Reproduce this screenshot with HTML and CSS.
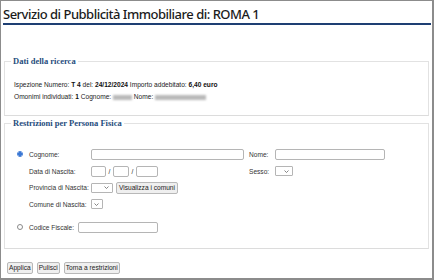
FILE: index.html
```html
<!DOCTYPE html>
<html>
<head>
  <meta charset="utf-8">
  <title>Servizio di Pubblicità Immobiliare</title>
  <link rel="stylesheet" href="styles.css">
</head>
<body>
  <div class="page">
    <h1 class="title">Servizio di Pubblicità Immobiliare di: ROMA 1</h1>

    <fieldset class="box box-dati">
      <legend>Dati della ricerca</legend>
      <div class="info">
        Ispezione Numero: <b>T 4</b> del: <b>24/12/2024</b> Importo addebitato: <b>6,40 euro</b>
      </div>
      <div class="info">
        Omonimi individuati: <b>1</b> Cognome: <span class="blur blur-short"></span> Nome: <span class="blur blur-long"></span>
      </div>
    </fieldset>

    <fieldset class="box box-restr">
      <legend>Restrizioni per Persona Fisica</legend>
      <div class="form">
        <span class="radio checked"></span>
        <label class="lbl">Cognome:</label>
        <div class="field"><span class="input w-cognome"></span></div>
        <label class="lbl">Nome:</label>
        <div class="field"><span class="input w-nome"></span></div>

        <span></span>
        <label class="lbl">Data di Nascita:</label>
        <div class="field">
          <span class="input w-gg"></span><span class="slash">/</span><span class="input w-mm"></span><span class="slash">/</span><span class="input w-aaaa"></span>
        </div>
        <label class="lbl">Sesso:</label>
        <div class="field">
          <span class="select w-sesso"><svg width="5" height="3" viewBox="0 0 5 3"><path d="M0.5 0.5 L2.5 2.5 L4.5 0.5" fill="none" stroke="#666" stroke-width="0.8"/></svg></span>
        </div>

        <span></span>
        <label class="lbl">Provincia di Nascita:</label>
        <div class="field span-rest">
          <span class="select w-prov"><svg width="5" height="3" viewBox="0 0 5 3"><path d="M0.5 0.5 L2.5 2.5 L4.5 0.5" fill="none" stroke="#666" stroke-width="0.8"/></svg></span>
          <span class="btn btn-comuni">Visualizza i comuni</span>
        </div>

        <span></span>
        <label class="lbl">Comune di Nascita:</label>
        <div class="field span-rest">
          <span class="select w-comune"><svg width="5" height="3" viewBox="0 0 5 3"><path d="M0.5 0.5 L2.5 2.5 L4.5 0.5" fill="none" stroke="#666" stroke-width="0.8"/></svg></span>
        </div>
      </div>

      <div class="cf-row">
        <span class="radio"></span>
        <label class="lbl">Codice Fiscale:</label>
        <span class="input w-cf"></span>
      </div>
    </fieldset>

    <div class="actions">
      <span class="btn">Applica</span>
      <span class="btn">Pulisci</span>
      <span class="btn btn-torna">Torna a restrizioni</span>
    </div>
  </div>
</body>
</html>
```

FILE: styles.css
```css
body {
  margin: 0;
  padding: 0;
  background-color: #fff;
  font-family: "Liberation Sans", Arial, sans-serif;
  font-size: 6.6px;
  color: #222;
}

.page {
  box-sizing: border-box;
  width: 434px;
  height: 280px;
  border-top: 1px solid #8c8c8c;
  border-left: 1px solid #8c8c8c;
  border-right: 2px solid #8c8c8c;
  border-bottom: 2px solid #8c8c8c;
  padding: 0 1px 0 2px;
}

.title {
  margin: 6px 0 0 0;
  padding: 0 0 1px 0;
  font-family: "Noto Sans", sans-serif;
  font-weight: 500;
  font-size: 13px;
  letter-spacing: -0.5px;
  line-height: 15px;
  color: #1b1b1b;
  border-bottom: 2px solid #1e3f73;
}

/* fieldsets */
.box {
  margin: 0 2px 0 1px;
  padding: 0 9px;
  border: 1px solid #e2e2e2;
  border-bottom-color: #dcdcdc;
}
.box legend {
  padding: 0 2px;
  margin-left: -3px;
  font-family: "Liberation Serif", "Times New Roman", serif;
  font-weight: bold;
  font-size: 8.5px;
  color: #1f4d7d;
}
.box-dati {
  margin-top: 31px;
  padding-top: 13px;
  padding-bottom: 12px;
}
.box-restr {
  margin-top: 2px;
  padding-top: 18px;
  padding-bottom: 15px;
}

.info {
  line-height: 12px;
  white-space: nowrap;
}
.info b {
  font-weight: bold;
  color: #111;
}
.blur {
  display: inline-block;
  height: 5px;
  vertical-align: middle;
  background-color: #b9b9b9;
  filter: blur(1px);
}
.blur-short { width: 19px; }
.blur-long { width: 51px; }

/* restriction form */
.form {
  display: grid;
  grid-template-columns: 15px 62px 158px 26px auto;
  grid-auto-rows: 16.7px;
  align-items: center;
}
.span-rest {
  grid-column: 3 / 6;
}
.field {
  display: flex;
  align-items: center;
}
.lbl {
  white-space: nowrap;
  color: #333;
}

.radio {
  box-sizing: border-box;
  display: inline-block;
  width: 6px;
  height: 6px;
  margin-left: 3px;
  border: 1px solid #8a8a8a;
  border-radius: 50%;
  background-color: #fff;
}
.radio.checked {
  border-color: #3b78d4;
  background: radial-gradient(circle, #3b78d4 0 1.6px, #fff 2px);
}

.input {
  box-sizing: border-box;
  display: inline-block;
  height: 11px;
  border: 1px solid #b5b5b5;
  border-radius: 2px;
  background-color: #fff;
}
.w-cognome { width: 153px; }
.w-nome { width: 110px; }
.w-gg { width: 15px; }
.w-mm { width: 16px; }
.w-aaaa { width: 22px; }
.w-cf { width: 80px; }
.slash {
  width: 7px;
  text-align: center;
}

.select {
  box-sizing: border-box;
  display: inline-flex;
  align-items: center;
  justify-content: flex-end;
  padding-right: 3px;
  height: 10px;
  border: 1px solid #b5b5b5;
  border-radius: 1px;
  background-color: #fff;
}
.w-sesso { width: 18px; }
.w-prov { width: 22px; }
.w-comune { width: 12px; }

.btn {
  box-sizing: border-box;
  display: inline-flex;
  align-items: center;
  height: 12px;
  padding: 0 1px;
  border: 1px solid #b8b8b8;
  border-radius: 2px;
  background-color: #efefef;
  color: #222;
  white-space: nowrap;
}
.btn-comuni {
  margin-left: 3px;
  padding: 0 2px;
}

.cf-row {
  display: flex;
  align-items: center;
  margin-top: 9px;
}
.cf-row .radio {
  margin-right: 6px;
}
.cf-row .lbl {
  margin-right: 4px;
}

.actions {
  display: flex;
  gap: 4px;
  margin: 13px 0 0 4px;
}
```
